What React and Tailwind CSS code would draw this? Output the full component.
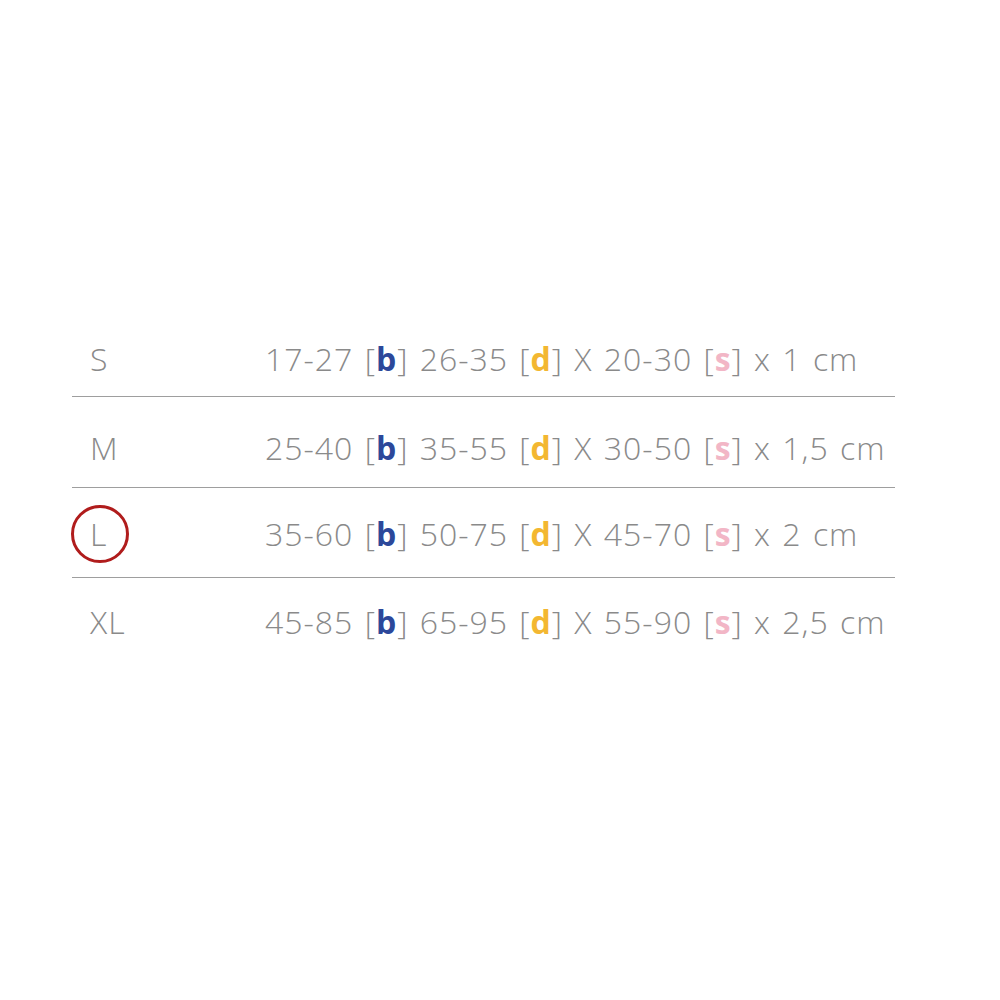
import React from "react";

const rows = [
  { size: "S", b: "17-27", d: "26-35", s: "20-30", w: "1", row: "h-[80px] pt-[5px]" },
  { size: "M", b: "25-40", d: "35-55", s: "30-50", w: "1,5", row: "h-[91px] pt-[11px]" },
  { size: "L", b: "35-60", d: "50-75", s: "45-70", w: "2", row: "h-[90px] pt-[2px]", marked: true },
  { size: "XL", b: "45-85", d: "65-95", s: "55-90", w: "2,5", row: "h-[88px]" },
];

function Tag({ letter, color }) {
  return (
    <>
      [<span className={`font-bold ${color}`}>{letter}</span>]
    </>
  );
}

export default function App() {
  return (
    <div
      className="w-[1000px] h-[1000px] bg-white pt-[317px]"
      style={{ fontFamily: '"Open Sans", sans-serif' }}
    >
      <div className="ml-[72px] w-[823px]">
        {rows.map((r, i) => (
          <div
            key={r.size}
            className={`flex items-center text-[32px] font-light text-[#8a8a8a] ${r.row} ${
              i < rows.length - 1 ? "border-b border-[#9e9e9e]" : ""
            }`}
          >
            <div className="w-[193px] pl-[18px] relative">
              {r.marked && (
                <span className="absolute left-[-1px] top-1/2 -translate-y-1/2 w-[58px] h-[58px] rounded-full border-[3px] border-[#b01c1c]" />
              )}
              <span className="relative tracking-[1px]">{r.size}</span>
            </div>
            <div className="whitespace-nowrap tracking-[1px] [word-spacing:2px]">
              {r.b} <Tag letter="b" color="text-[#2c489a]" /> {r.d}{" "}
              <Tag letter="d" color="text-[#f3b731]" /> X {r.s}{" "}
              <Tag letter="s" color="text-[#f2b6c6]" /> x {r.w} cm
            </div>
          </div>
        ))}
      </div>
    </div>
  );
}
